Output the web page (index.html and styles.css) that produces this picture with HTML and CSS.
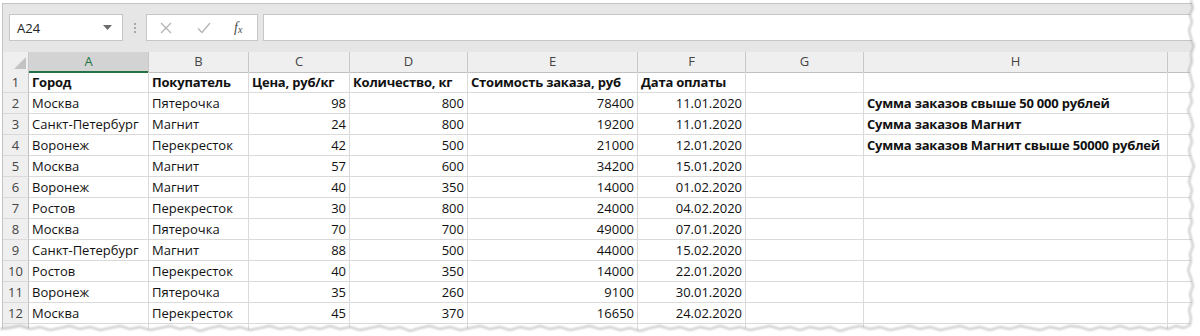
FILE: index.html
```html
<!DOCTYPE html>
<html lang="ru">
<head>
<meta charset="utf-8">
<title>Excel</title>
<link rel="stylesheet" href="styles.css">
</head>
<body>
<div class="frame">
  <div class="app">
    <div class="toolbar">
      <div class="namebox">
        <span class="nb-text">A24</span>
        <svg class="nb-arrow" width="9" height="5" viewBox="0 0 9 5"><path d="M0 0h9L4.5 5z" fill="#6d6d6d"/></svg>
      </div>
      <div class="dots"><i></i><i></i><i></i></div>
      <div class="fbuttons">
        <svg class="fb-x" width="12" height="12" viewBox="0 0 12 12"><path d="M1 1l10 10M11 1L1 11" stroke="#b4b4b4" stroke-width="1.3" fill="none"/></svg>
        <svg class="fb-ok" width="14" height="12" viewBox="0 0 14 12"><path d="M1 6.5l4 4L13 1" stroke="#b4b4b4" stroke-width="1.3" fill="none"/></svg>
        <span class="fb-fx">f<sub>x</sub></span>
      </div>
      <div class="formula"></div>
    </div>
    <div class="sheet">
      <div class="row hdr">
        <div class="corner"><svg width="12" height="12" viewBox="0 0 12 12"><path d="M12 0V12H0z" fill="#c3c3c3"/></svg></div>
        <div class="ch sel">A</div><div class="ch">B</div><div class="ch">C</div><div class="ch">D</div><div class="ch">E</div><div class="ch">F</div><div class="ch">G</div><div class="ch">H</div><div class="ch"></div>
      </div>
      <div class="row b">
        <div class="rh">1</div><div class="c">Город</div><div class="c">Покупатель</div><div class="c">Цена, руб/кг</div><div class="c">Количество, кг</div><div class="c">Стоимость заказа, руб</div><div class="c">Дата оплаты</div><div class="c"></div><div class="c"></div><div class="c"></div>
      </div>
      <div class="row">
        <div class="rh">2</div><div class="c">Москва</div><div class="c">Пятерочка</div><div class="c n">98</div><div class="c n">800</div><div class="c n">78400</div><div class="c n">11.01.2020</div><div class="c"></div><div class="c bold">Сумма заказов свыше 50 000 рублей</div><div class="c"></div>
      </div>
      <div class="row">
        <div class="rh">3</div><div class="c">Санкт-Петербург</div><div class="c">Магнит</div><div class="c n">24</div><div class="c n">800</div><div class="c n">19200</div><div class="c n">11.01.2020</div><div class="c"></div><div class="c bold">Сумма заказов Магнит</div><div class="c"></div>
      </div>
      <div class="row">
        <div class="rh">4</div><div class="c">Воронеж</div><div class="c">Перекресток</div><div class="c n">42</div><div class="c n">500</div><div class="c n">21000</div><div class="c n">12.01.2020</div><div class="c"></div><div class="c bold">Сумма заказов Магнит свыше 50000 рублей</div><div class="c"></div>
      </div>
      <div class="row">
        <div class="rh">5</div><div class="c">Москва</div><div class="c">Магнит</div><div class="c n">57</div><div class="c n">600</div><div class="c n">34200</div><div class="c n">15.01.2020</div><div class="c"></div><div class="c"></div><div class="c"></div>
      </div>
      <div class="row">
        <div class="rh">6</div><div class="c">Воронеж</div><div class="c">Магнит</div><div class="c n">40</div><div class="c n">350</div><div class="c n">14000</div><div class="c n">01.02.2020</div><div class="c"></div><div class="c"></div><div class="c"></div>
      </div>
      <div class="row">
        <div class="rh">7</div><div class="c">Ростов</div><div class="c">Перекресток</div><div class="c n">30</div><div class="c n">800</div><div class="c n">24000</div><div class="c n">04.02.2020</div><div class="c"></div><div class="c"></div><div class="c"></div>
      </div>
      <div class="row">
        <div class="rh">8</div><div class="c">Москва</div><div class="c">Пятерочка</div><div class="c n">70</div><div class="c n">700</div><div class="c n">49000</div><div class="c n">07.01.2020</div><div class="c"></div><div class="c"></div><div class="c"></div>
      </div>
      <div class="row">
        <div class="rh">9</div><div class="c">Санкт-Петербург</div><div class="c">Магнит</div><div class="c n">88</div><div class="c n">500</div><div class="c n">44000</div><div class="c n">15.02.2020</div><div class="c"></div><div class="c"></div><div class="c"></div>
      </div>
      <div class="row">
        <div class="rh">10</div><div class="c">Ростов</div><div class="c">Перекресток</div><div class="c n">40</div><div class="c n">350</div><div class="c n">14000</div><div class="c n">22.01.2020</div><div class="c"></div><div class="c"></div><div class="c"></div>
      </div>
      <div class="row">
        <div class="rh">11</div><div class="c">Воронеж</div><div class="c">Пятерочка</div><div class="c n">35</div><div class="c n">260</div><div class="c n">9100</div><div class="c n">30.01.2020</div><div class="c"></div><div class="c"></div><div class="c"></div>
      </div>
      <div class="row">
        <div class="rh">12</div><div class="c">Москва</div><div class="c">Перекресток</div><div class="c n">45</div><div class="c n">370</div><div class="c n">16650</div><div class="c n">24.02.2020</div><div class="c"></div><div class="c"></div><div class="c"></div>
      </div>
      <div class="row">
        <div class="rh">13</div><div class="c">Ростов</div><div class="c">Магнит</div><div class="c n">40</div><div class="c n">350</div><div class="c n">14000</div><div class="c n">22.02.2020</div><div class="c"></div><div class="c"></div><div class="c"></div>
      </div>
    </div>
  </div>
  <svg class="torn" width="1200" height="336" viewBox="0 0 1200 336">
    <defs>
      <filter id="sh" x="-5%" y="-5%" width="110%" height="110%"><feGaussianBlur stdDeviation="1.2"/></filter>
    </defs>
    <path class="torn-fill" d="M1200 0 L1191 0 L1193 8 L1190 15 L1192 22 L1189 30 L1191 38 L1194 46 L1191 54 L1192 62 L1189 70 L1191 78 L1193 86 L1190 94 L1192 102 L1188 110 L1191 118 L1193 126 L1190 134 L1192 142 L1189 150 L1191 158 L1194 166 L1191 174 L1189 182 L1192 190 L1190 198 L1193 206 L1190 214 L1192 222 L1189 230 L1191 238 L1193 246 L1190 254 L1191 262 L1188 270 L1191 278 L1193 286 L1190 294 L1192 302 L1189 310 L1191 318 L1190 325 L1184 328 L1176 326 L1168 329 L1160 327 L1150 330 L1140 327 L1130 329 L1120 326 L1110 329 L1100 327 L1090 330 L1080 327 L1070 326 L1060 329 L1050 327 L1040 330 L1030 328 L1020 326 L1010 329 L1000 327 L990 330 L980 327 L970 329 L960 326 L950 328 L940 330 L930 327 L920 329 L910 326 L900 328 L890 330 L880 327 L870 329 L860 326 L850 328 L840 331 L830 327 L820 329 L810 327 L800 330 L790 327 L780 329 L770 326 L760 328 L750 330 L740 327 L730 329 L720 326 L710 329 L700 327 L690 330 L680 327 L670 329 L660 326 L650 328 L640 331 L630 328 L620 330 L610 327 L600 329 L590 326 L580 328 L570 330 L560 327 L550 329 L540 326 L530 329 L520 327 L510 330 L500 327 L490 329 L480 326 L470 328 L460 330 L450 327 L440 329 L430 326 L420 328 L410 331 L400 327 L390 329 L380 326 L370 328 L360 330 L350 327 L340 329 L330 326 L320 329 L310 327 L300 330 L290 327 L280 329 L270 326 L260 328 L250 330 L240 327 L230 329 L220 326 L210 328 L200 331 L190 327 L180 329 L170 326 L160 328 L150 330 L140 327 L130 329 L120 326 L110 328 L100 330 L90 327 L80 329 L70 326 L60 328 L50 330 L40 327 L30 329 L20 326 L10 328 L0 329 L0 336 L1200 336 Z"/>
    <path class="torn-shadow" filter="url(#sh)" d="M1191 0 L1193 8 L1190 15 L1192 22 L1189 30 L1191 38 L1194 46 L1191 54 L1192 62 L1189 70 L1191 78 L1193 86 L1190 94 L1192 102 L1188 110 L1191 118 L1193 126 L1190 134 L1192 142 L1189 150 L1191 158 L1194 166 L1191 174 L1189 182 L1192 190 L1190 198 L1193 206 L1190 214 L1192 222 L1189 230 L1191 238 L1193 246 L1190 254 L1191 262 L1188 270 L1191 278 L1193 286 L1190 294 L1192 302 L1189 310 L1191 318 L1190 325 L1184 328 L1176 326 L1168 329 L1160 327 L1150 330 L1140 327 L1130 329 L1120 326 L1110 329 L1100 327 L1090 330 L1080 327 L1070 326 L1060 329 L1050 327 L1040 330 L1030 328 L1020 326 L1010 329 L1000 327 L990 330 L980 327 L970 329 L960 326 L950 328 L940 330 L930 327 L920 329 L910 326 L900 328 L890 330 L880 327 L870 329 L860 326 L850 328 L840 331 L830 327 L820 329 L810 327 L800 330 L790 327 L780 329 L770 326 L760 328 L750 330 L740 327 L730 329 L720 326 L710 329 L700 327 L690 330 L680 327 L670 329 L660 326 L650 328 L640 331 L630 328 L620 330 L610 327 L600 329 L590 326 L580 328 L570 330 L560 327 L550 329 L540 326 L530 329 L520 327 L510 330 L500 327 L490 329 L480 326 L470 328 L460 330 L450 327 L440 329 L430 326 L420 328 L410 331 L400 327 L390 329 L380 326 L370 328 L360 330 L350 327 L340 329 L330 326 L320 329 L310 327 L300 330 L290 327 L280 329 L270 326 L260 328 L250 330 L240 327 L230 329 L220 326 L210 328 L200 331 L190 327 L180 329 L170 326 L160 328 L150 330 L140 327 L130 329 L120 326 L110 328 L100 330 L90 327 L80 329 L70 326 L60 328 L50 330 L40 327 L30 329 L20 326 L10 328 L0 329"/>
  </svg>
</div>
</body>
</html>
```

FILE: styles.css
```css
* { box-sizing: border-box; }
html, body { margin: 0; padding: 0; background: #ffffff; }
.frame {
  position: relative;
  width: 1200px;
  height: 336px;
  overflow: hidden;
  font-family: "Open Sans", "Noto Sans", sans-serif;
}
.app {
  margin: 3px 0 0 2px;
  border-left: 1px solid #c4c4c4;
  border-top: 1px solid #c4c4c4;
  background: #e6e6e6;
  height: 340px;
}
.toolbar {
  display: flex;
  align-items: center;
  height: 48px;
  padding: 10px 0 11px 6px;
}
.namebox {
  width: 114px;
  height: 27px;
  background: #fff;
  border: 1px solid #c6c6c6;
  display: flex;
  align-items: center;
  justify-content: space-between;
  padding: 0 10px 0 7px;
  font-size: 13px;
  color: #222;
}
.dots {
  width: 23px;
  display: flex;
  flex-direction: column;
  align-items: center;
  gap: 2px;
}
.dots i { display: block; width: 2px; height: 2px; background: #a8a8a8; }
.fbuttons {
  width: 112px;
  height: 27px;
  background: #fff;
  border: 1px solid #c6c6c6;
  display: flex;
  align-items: center;
  padding-left: 13px;
}
.fb-ok { margin-left: 25px; }
.fb-fx {
  margin-left: 23px;
  font-family: "Liberation Serif", serif;
  font-style: italic;
  font-size: 14px;
  color: #4a4a4a;
}
.fb-fx sub { font-size: 10px; vertical-align: -1px; }
.formula {
  margin-left: 5px;
  flex: 1;
  height: 27px;
  background: #fff;
  border: 1px solid #c6c6c6;
}
.sheet { background: #fff; }
.row {
  display: grid;
  grid-template-columns: 26px 120px 100px 101px 118px 170px 108px 118px 304px 100px;
  height: 21px;
  font-size: 13px;
  color: #111;
}
.row.hdr { height: 20px; background: #efefef; }
.corner {
  background: #efefef;
  border-right: 1px solid #c8c8c8;
  border-bottom: 1px solid #c0c0c0;
  display: flex;
  align-items: flex-end;
  justify-content: flex-end;
  padding: 0 2px 3px 0;
}
.ch {
  border-right: 1px solid #c8c8c8;
  border-bottom: 1px solid #c0c0c0;
  text-align: center;
  line-height: 19px;
  font-size: 13px;
  color: #444;
}
.ch.sel {
  background: #d3d3d3;
  border-bottom: 2px solid #217346;
  color: #217346;
}
.rh {
  background: #efefef;
  border-right: 1px solid #c0c0c0;
  border-bottom: 1px solid #dadada;
  text-align: center;
  line-height: 20px;
  color: #444;
}
.c {
  border-right: 1px solid #dadada;
  border-bottom: 1px solid #dadada;
  padding: 0 3px;
  line-height: 20px;
  white-space: nowrap;
}
.c.n { text-align: right; }
.row.b .c, .c.bold { font-weight: bold; letter-spacing: -0.2px; }
.torn {
  position: absolute;
  left: 0;
  top: 0;
  pointer-events: none;
}
.torn-fill { fill: #ffffff; }
.torn-shadow { fill: none; stroke: #8c8c8c; stroke-width: 1; }
```
